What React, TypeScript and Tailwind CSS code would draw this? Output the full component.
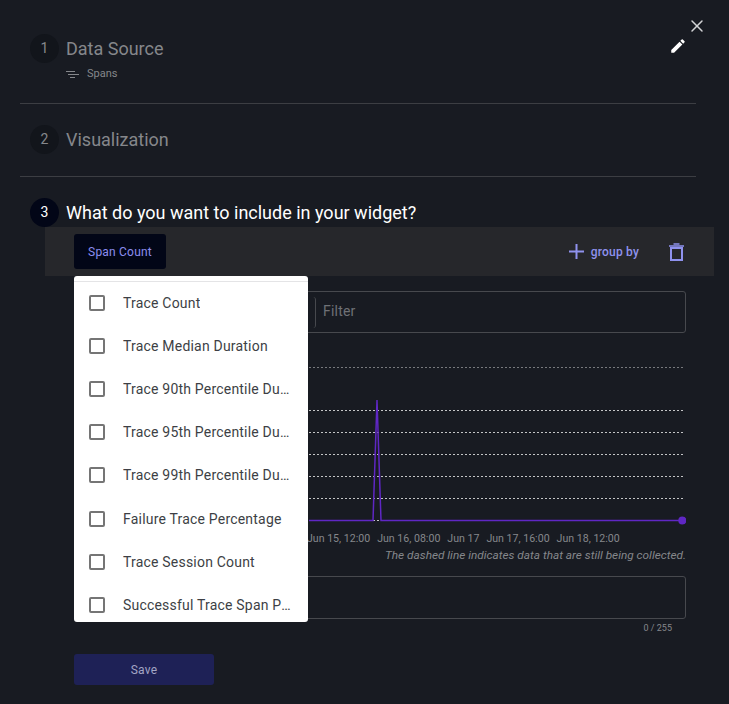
import { X } from 'lucide-react'

const metrics = [
  'Trace Count',
  'Trace Median Duration',
  'Trace 90th Percentile Duration',
  'Trace 95th Percentile Duration',
  'Trace 99th Percentile Duration',
  'Failure Trace Percentage',
  'Trace Session Count',
  'Successful Trace Span Percentage',
]

const gridLines = [60, 82, 104, 126, 148, 170]
const ticks = ['Jun 15, 12:00', 'Jun 16, 08:00', 'Jun 17', 'Jun 17, 16:00', 'Jun 18, 12:00']

function StepBadge({ n, active }: { n: number; active?: boolean }) {
  return (
    <div
      className={`flex h-[29px] w-[29px] shrink-0 items-center justify-center rounded-full pb-[2px] text-sm ${
        active ? 'bg-[#020617] text-white' : 'bg-[#12151b] text-[#85878b]'
      }`}
    >
      {n}
    </div>
  )
}

function Chart() {
  return (
    <svg width="377" height="180" viewBox="0 0 377 180" className="block">
      <line x1="0" x2="376" y1="17.5" y2="17.5" stroke="#77797d" strokeDasharray="2 2" />
      {gridLines.map((y) => (
        <line key={y} x1="0" x2="376" y1={y + 0.5} y2={y + 0.5} stroke="#c4c5c7" strokeWidth="1" strokeDasharray="2 2" />
      ))}
      <path d="M0 170.5H64L68 50L72 170.5H373" fill="none" stroke="#5f27c4" strokeWidth="1.5" />
      <circle cx="373.3" cy="170.5" r="4" fill="#5f27c4" />
    </svg>
  )
}

export default function App() {
  return (
    <div
      className="relative h-[704px] w-[729px] overflow-hidden bg-[#181b22] text-white"
      style={{ fontFamily: 'Roboto, sans-serif' }}
    >
      <button className="absolute right-[22px] top-[16px] text-[#d4d5d7]">
        <X className="h-5 w-5" strokeWidth={1.75} />
      </button>

      <div className="ml-[30px] w-[666px] pt-[34px]">
        <div className="flex h-[69px] items-start gap-[7px]">
          <StepBadge n={1} />
          <div className="flex-1">
            <div className="pt-[3px] text-lg leading-[24px] text-[#85878b]">Data Source</div>
            <div className="mt-[6px] flex items-center gap-[8px] text-[11px] leading-[14px] text-[#85878b]">
              <svg width="13" height="8" viewBox="0 0 13 8" fill="none" stroke="#85878b" strokeWidth="1">
                <path d="M0 1.5H9M2 4.5H13M4 7.5H9" />
              </svg>
              Spans
            </div>
          </div>
          <svg width="18" height="18" viewBox="0 0 24 24" fill="#fff" className="mr-[9px] mt-[3px]">
            <path d="M3 17.25V21h3.75L17.81 9.94l-3.75-3.75zM20.71 7.04a1 1 0 0 0 0-1.41l-2.34-2.34a1 1 0 0 0-1.41 0l-1.83 1.83 3.75 3.75z" />
          </svg>
        </div>
      </div>
      <div className="mx-[20px] h-px w-[676px] bg-[#3c3e43]" />

      <div className="ml-[30px] mt-[21px] flex h-[51px] items-start gap-[7px]">
        <StepBadge n={2} />
        <div className="pt-[3px] text-lg leading-[24px] text-[#85878b]">Visualization</div>
      </div>
      <div className="mx-[20px] h-px w-[676px] bg-[#3c3e43]" />

      <div className="ml-[30px] mt-[21px] flex items-start gap-[7px]">
        <StepBadge n={3} active />
        <div className="pt-[3px] text-lg leading-[24px] text-white">What do you want to include in your widget?</div>
      </div>

      <div className="ml-[45px] flex h-[49px] w-[669px] items-center justify-between bg-[#26272b] pl-[29px] pr-[30px]">
        <button className="h-[35px] w-[92px] rounded-[3px] bg-[#020617] text-xs tracking-[0.2px] text-[#8b8df0]">
          Span Count
        </button>
        <div className="flex items-center">
          <svg width="15" height="15" viewBox="0 0 15 15" fill="none" stroke="#8f92ee" strokeWidth="2">
            <path d="M0 7.5H15M7.5 0V15" />
          </svg>
          <span className="ml-[7px] text-xs font-medium tracking-[0.2px] text-[#8f92ee]">group by</span>
          <svg width="15" height="18" viewBox="0 0 15 18" fill="none" stroke="#8f92ee" strokeWidth="2" className="ml-[30px]">
            <path d="M2 5V17H13V5Z" />
            <path d="M0 3H15M4.5 1H10.5" strokeWidth="1.5" />
          </svg>
        </div>
      </div>

      <div className="ml-[74px] mt-[15px] flex h-[42px] w-[612px] items-center rounded-[3px] border border-[#47494e]">
        <div className="h-[31px] w-[241px] shrink-0 rounded-r-[3px] border-r border-[#47494e]" />
        <div className="ml-[7px] pb-[2px] text-sm tracking-[0.2px] text-[#6f7176]">Filter</div>
      </div>

      <div className="ml-[309px] mt-[17px]">
        <Chart />
      </div>
      <div className="ml-[307px] mt-[2px] flex gap-[7px] text-[10.6px] leading-[14px] text-[#85878b]">
        {ticks.map((t) => (
          <span key={t}>{t}</span>
        ))}
      </div>
      <div className="mr-[43px] mt-[2px] text-right text-[11.8px] italic leading-[14px] text-[#85878b]">
        The dashed line indicates data that are still being collected.
      </div>

      <div className="ml-[74px] mt-[14px] h-[43px] w-[612px] rounded-[3px] border border-[#47494e]" />
      <div className="mr-[57px] mt-[3px] text-right text-[9px] leading-[12px] text-[#85878b]">0 / 255</div>

      <button className="ml-[74px] mt-[20px] block h-[31px] w-[140px] rounded-[3px] bg-[#1e2156] text-xs tracking-[0.2px] text-[#a3a5c4]">
        Save
      </button>

      <div className="absolute left-[74px] top-[276px] h-[346px] w-[234px] overflow-hidden rounded-[3px] bg-white">
        <div className="mt-[5px] h-px bg-[#e4e4e6]" />
        <div className="mt-[-0.5px]">
          {metrics.map((m) => (
            <div key={m} className="flex h-[43.1px] items-center pl-[15px] pr-[17px] text-sm tracking-[0.2px] text-[#3d3f45]">
              <span className="h-[16px] w-[16px] shrink-0 rounded-[2px] border-2 border-[#757575]" />
              <span className="ml-[18px] truncate">{m}</span>
            </div>
          ))}
        </div>
      </div>
    </div>
  )
}
